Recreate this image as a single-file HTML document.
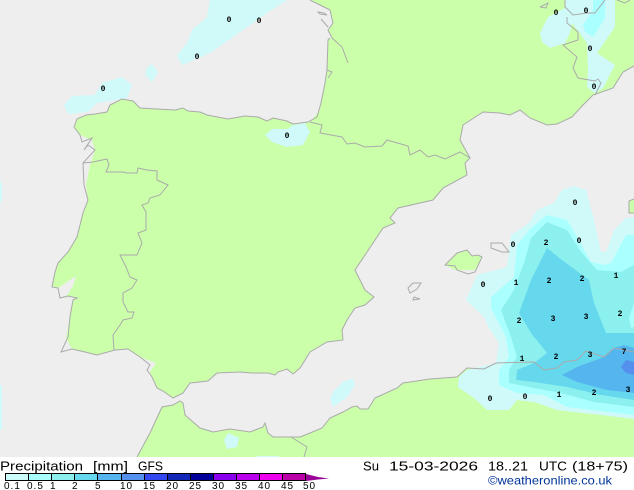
<!DOCTYPE html>
<html>
<head>
<meta charset="utf-8">
<style>
html,body{margin:0;padding:0;background:#fff;width:634px;height:490px;overflow:hidden}
svg{display:block}
.n{font:bold 8px "Liberation Mono",monospace;text-anchor:middle;fill:#000}
.l{font:10px "Liberation Sans",sans-serif;fill:#000;letter-spacing:1px}
.c{fill:none;stroke:#aaaaaa;stroke-width:1}
</style>
</head>
<body>
<svg width="634" height="490" viewBox="0 0 634 490" xmlns="http://www.w3.org/2000/svg">
<rect width="634" height="457" fill="#eeeeee"/>
<!-- land -->
<g fill="#ccffaa">
<path id="iberia" d="M74 127L77 119L86 115L95 114L107 112L110 105L122 99L133 101L140 108L157 109L175 110L183 108L188 111L200 112L207 115L228 119L245 116L258 117L267 121L273 118L287 121L293 124L308 122L322 125L320 133L342 137L347 144L355 143L365 147L382 146L387 140L408 146L410 155L420 150L428 157L435 155L445 159L460 152L465 155L470 158L465 163L467 175L443 188L433 200L398 208L390 218L395 223L383 228L367 252L355 270L365 290L374 297L365 305L355 308L347 320L342 330L343 340L327 342L310 352L300 368L293 374L287 369L278 372L275 375L268 373L252 373L240 372L217 373L208 381L190 383L183 393L173 398L163 391L157 388L152 377L150 372L156 363L140 357L128 349L115 350L97 355L85 352L72 349L66 338L70 317L73 300L77 298L68 296L64 300L73 286L76 276L58 288L52 287L55 272L58 263L68 252L77 237L83 213L88 200L86 185L90 165L95 150L92 140L80 135Z"/>
<path d="M310 0L330 10L333 23L328 30L332 38L328 40L327 70L320 110L310 122L322 125L320 133L342 137L347 144L355 143L365 147L382 146L387 140L408 146L410 155L420 150L428 157L435 155L445 159L460 152L465 155L470 158L460 140L463 125L483 112L500 113L510 115L520 110L530 118L547 125L557 124L572 117L583 105L593 95L613 88L623 72L634 66L634 0Z"/>
<path d="M137 457L150 433L162 407L173 405L180 401L183 403L185 415L200 428L213 432L230 429L250 432L263 427L265 423L268 433L273 437L300 437L310 433L322 428L330 418L343 412L352 407L357 406L360 409L368 409L375 398L397 388L403 383L430 379L457 377L467 368L484 369L496 363L534 362L634 352L634 457Z"/>
<path d="M445 265L457 253L467 250L472 256L478 255L482 257L475 270L455 270Z"/>
<path d="M629 201L634 199L634 213L629 213Z"/>
</g>
<!-- rain: small blobs -->
<g fill="#d0fafa">
<path d="M210 0L207 17L192 30L187 43L177 55L182 65L210 53L233 37L267 13L287 0Z"/>
<path d="M152 64L158 72L152 82L145 75L147 67Z"/>
<path d="M122 77L132 85L127 98L97 103L88 112L68 114L64 105L72 96L95 95L102 83Z"/>
<path d="M265 135L272 129L288 129L293 125L305 123L310 132L303 145L287 147L272 142Z"/>
<path d="M343 382L353 378L355 385L347 397L333 407L330 400L333 392Z"/>
<path d="M228 433L239 438L237 447L227 449L224 440Z"/>
<path d="M255 457L258 456L278 456L280 457Z"/>
<path d="M540 33L548 17L565 8L565 0L615 0L615 27L597 53L615 65L603 88L595 93L587 87L588 70L587 43L572 23L570 33L565 43L550 48L542 42Z"/>
<path d="M458 387L474 398L487 410L509 410L517 400L534 402L557 410L601 415L634 419L634 217L626 218L614 230L606 252L601 252L594 220L586 190L574 186L562 190L554 203L537 210L529 223L511 235L507 267L477 275L466 300L484 317L489 328L499 343L496 363L467 370L459 377Z"/>
<path d="M0 180L2 184L2 200L0 204Z"/>
<path d="M0 385L2 385L2 430L0 430Z"/>
</g>
<path fill="#aaffff" d="M593 0L605 0L605 18L593 37L585 32L583 25L593 10Z"/>
<path fill="#aaffff" d="M634 235L626 235L611 263L604 265L591 262L577 237L567 220L547 215L531 228L517 245L514 277L491 297L491 308L506 337L509 357L499 370L499 385L517 393L544 395L567 407L634 415Z"/>
<path fill="#8cf0ee" d="M547 222L567 230L581 252L597 270L621 272L634 265L634 407L594 402L561 393L534 388L509 383L509 370L517 357L511 337L501 310L514 290L524 263L531 238Z"/>
<path fill="#aaffff" d="M634 303L629 318L631 328L634 327Z"/>
<path fill="#66d8ee" d="M547 248L562 260L589 280L594 303L606 333L634 333L634 400L601 395L567 387L534 382L516 380L517 370L534 363L547 353L531 333L519 313L531 280Z"/>
<path fill="#55b5ee" d="M562 375L577 367L604 357L614 348L624 345L634 348L634 393L607 390L577 382Z"/>
<path fill="#5590ee" d="M621 367L626 360L634 362L634 375L626 373Z"/>
<!-- coast lines -->
<g class="c">
<path d="M74 127L77 119L86 115L95 114L107 112L110 105L122 99L133 101L140 108L157 109L175 110L183 108L188 111L200 112L207 115L228 119L245 116L258 117L267 121L273 118L287 121L293 124L308 122L317 117L321 103L325 83L327 70L328 40L330 38"/>
<path d="M310 0L330 10L333 23L328 30L332 38L342 47L348 63M327 70L332 72L328 78"/>
<path d="M318 12L324 13L327 15L320 14ZM321 19L328 27"/>
<path d="M310 122L322 125L320 133L342 137L347 144L355 143L365 147L382 146L387 140L408 146L410 155L420 150L428 157L435 155L445 159L460 152L465 155L470 158L465 163L467 175L443 188L433 200L398 208L390 218L395 223L383 228L367 252L355 270L365 290L374 297L365 305L355 308L347 320L342 330L343 340L327 342L310 352L300 368L293 374L287 369L278 372L275 375L268 373L252 373L240 372L217 373L208 381L190 383L183 393L173 398L163 391L157 388L152 377L147 370L150 365L140 357L128 349L115 350L97 355L85 352L72 349L61 352L68 337L70 317L73 300L77 298L68 296L60 298L58 288L52 287L55 272L58 263L68 252L77 237L83 213L88 200L84 185L83 163L95 150L88 145L84 150L92 138L82 142L80 135L74 127"/>
<path d="M470 158L460 140L463 125L483 112L500 113L510 115L520 110L530 118L547 125L557 124L572 117L583 105L593 95L613 88L623 72L634 66"/>
<path d="M83 163L93 162L107 159L109 165L106 172L123 172L127 173L137 173L138 168L147 170L157 171L157 180L168 185L160 195L150 198L148 203L142 205L146 212L146 230L138 233L142 243L137 255L120 255L126 267L130 277L137 280L132 288L123 293L123 302L128 312L134 312L132 318L123 320L120 325L113 335L114 350"/>
<path d="M137 457L150 433L162 407L173 405L180 401L183 403L185 415L200 428L213 432L230 429L250 432L263 427L265 423L268 433L273 437L300 437L310 433L322 428L330 418L343 412L352 407L357 406L360 409L368 409L375 398L397 388L403 383L430 379L457 377L467 368L484 369L496 363L534 362L544 370L557 368L564 362L577 360L586 351L592 353L604 357L614 348L634 352"/>
<path d="M291 437L307 447L304 457"/>
<path d="M445 265L457 253L467 250L472 256L478 255L482 257L475 272L468 274L457 270L455 266Z"/>
<path d="M491 243L502 243L509 252L502 252L491 248Z"/>
<path d="M408 288L413 283L421 283L417 289L410 293ZM413 300L414 297L420 299Z"/>
<path d="M565 0L565 7L573 15L587 13L595 13L605 0M567 17L567 23L578 32L578 40L563 45L577 57L573 68L578 78L595 81L598 79L601 83L595 95"/>
<path d="M540 7L548 3L546 8L540 7M617 0L625 3L630 0M629 201L634 199M629 201L629 213L634 213"/>
</g>
<!-- values -->
<g class="n">
<text x="229" y="22">0</text><text x="259" y="23">0</text><text x="197" y="59">0</text><text x="103" y="91">0</text><text x="287" y="138">0</text>
<text x="556" y="15">0</text><text x="586" y="13">0</text><text x="590" y="51">0</text><text x="594" y="89">0</text>
<text x="575" y="205">0</text><text x="579" y="243">0</text><text x="546" y="245">2</text><text x="513" y="247">0</text>
<text x="483" y="287">0</text><text x="516" y="285">1</text><text x="549" y="283">2</text><text x="582" y="281">2</text><text x="616" y="278">1</text>
<text x="620" y="316">2</text><text x="586" y="319">3</text><text x="553" y="321">3</text><text x="519" y="323">2</text>
<text x="522" y="361">1</text><text x="556" y="359">2</text><text x="590" y="357">3</text><text x="624" y="354">7</text>
<text x="628" y="392">3</text><text x="594" y="395">2</text><text x="559" y="397">1</text><text x="525" y="399">0</text><text x="490" y="401">0</text>
</g>
<!-- footer -->
<rect y="457" width="634" height="33" fill="#fff"/>
<g font-family="'Liberation Sans',sans-serif" font-size="13" fill="#000">
<text x="0" y="470.5" textLength="83" lengthAdjust="spacingAndGlyphs">Precipitation</text>
<text x="93" y="470.5" textLength="35" lengthAdjust="spacingAndGlyphs">[mm]</text>
<text x="138" y="470.5" textLength="25" lengthAdjust="spacingAndGlyphs">GFS</text>
<text x="363" y="470.5" textLength="16" lengthAdjust="spacingAndGlyphs">Su</text>
<text x="389" y="470.5" textLength="89" lengthAdjust="spacingAndGlyphs">15-03-2026</text>
<text x="488" y="470.5" textLength="40" lengthAdjust="spacingAndGlyphs">18..21</text>
<text x="539" y="470.5" textLength="28" lengthAdjust="spacingAndGlyphs">UTC</text>
<text x="572" y="470.5" textLength="56" lengthAdjust="spacingAndGlyphs">(18+75)</text>
<text x="488" y="484.5" textLength="124" lengthAdjust="spacingAndGlyphs" fill="#003399" font-size="12">©weatheronline.co.uk</text>
</g>
<!-- legend -->
<g shape-rendering="crispEdges">
<rect x="5" y="473" width="23" height="8" fill="#ccfbfb"/>
<rect x="28" y="473" width="23" height="8" fill="#aaffff"/>
<rect x="51" y="473" width="23" height="8" fill="#8cf0ee"/>
<rect x="74" y="473" width="23" height="8" fill="#66d8ee"/>
<rect x="97" y="473" width="24" height="8" fill="#55b5ee"/>
<rect x="121" y="473" width="23" height="8" fill="#5590ee"/>
<rect x="144" y="473" width="23" height="8" fill="#3348ee"/>
<rect x="167" y="473" width="23" height="8" fill="#1428b8"/>
<rect x="190" y="473" width="23" height="8" fill="#000099"/>
<rect x="213" y="473" width="23" height="8" fill="#8800ee"/>
<rect x="236" y="473" width="23" height="8" fill="#bb00ee"/>
<rect x="259" y="473" width="23" height="8" fill="#ee00ee"/>
<rect x="282" y="473" width="24" height="8" fill="#bb00aa"/>
<path fill="none" stroke="#000" d="M5.5 473.5H305.5V480.5H5.5ZM28.5 473V481M51.5 473V481M74.5 473V481M97.5 473V481M121.5 473V481M144.5 473V481M167.5 473V481M190.5 473V481M213.5 473V481M236.5 473V481M259.5 473V481M282.5 473V481"/>
</g>
<path fill="#990099" d="M306 474L318 477L329 478.5L318 479.5L306 481Z"/>
<g class="l">
<text x="4" y="489">0.1</text><text x="27" y="489">0.5</text><text x="50" y="489">1</text><text x="72" y="489">2</text><text x="95" y="489">5</text>
<text x="120" y="489">10</text><text x="143" y="489">15</text><text x="166" y="489">20</text><text x="189" y="489">25</text><text x="212" y="489">30</text>
<text x="235" y="489">35</text><text x="258" y="489">40</text><text x="281" y="489">45</text><text x="303" y="489">50</text>
</g>
</svg>
</body>
</html>
